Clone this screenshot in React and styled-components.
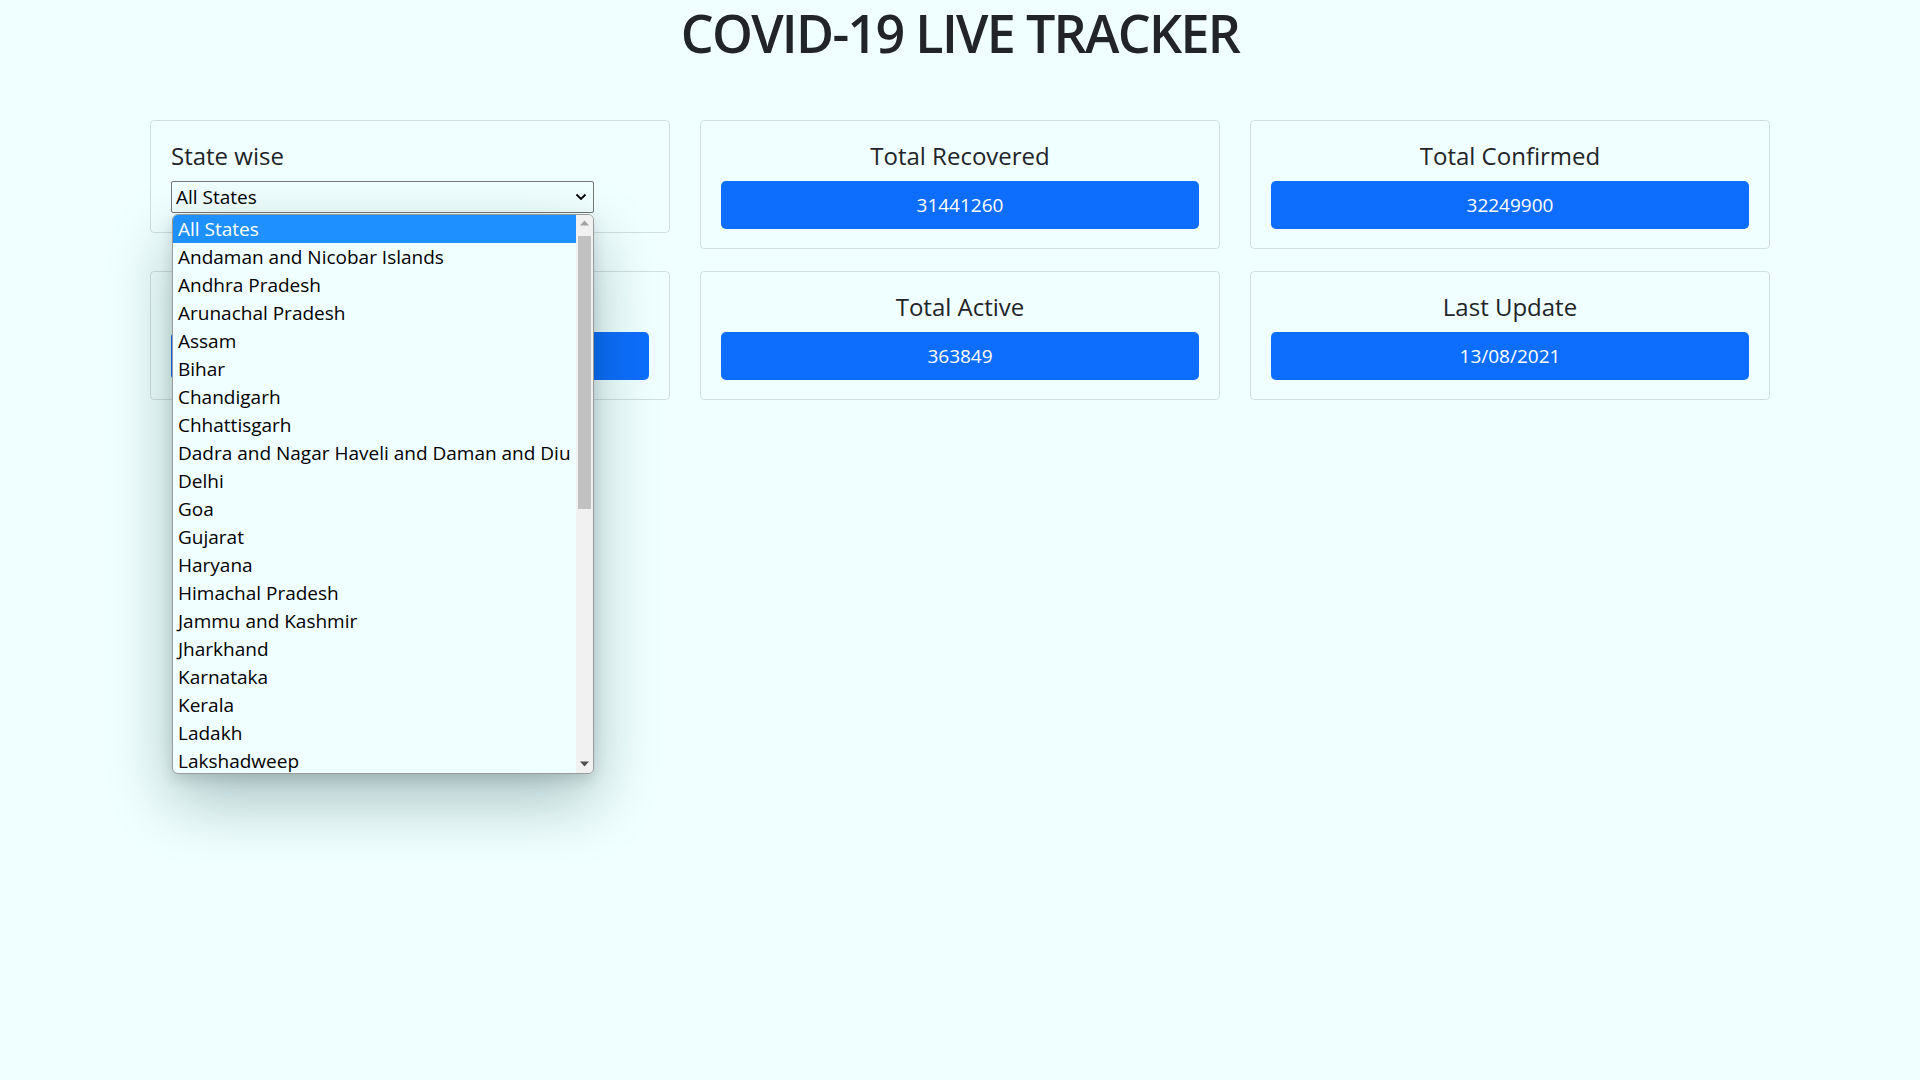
import React from "react";
import styled, { createGlobalStyle } from "styled-components";

const GlobalStyle = createGlobalStyle`
  html, body {
    margin: 0;
    padding: 0;
    background: #f0ffff;
    font-family: "Open Sans", "Noto Sans", "Liberation Sans", sans-serif;
    color: #212529;
  }
  * { box-sizing: border-box; }
`;

const Page = styled.div`
  min-height: 1080px;
  background: #f0ffff;
`;

const Title = styled.h1`
  margin: 0 0 55px;
  text-align: center;
  font-size: 52px;
  letter-spacing: -1.7px;
  font-weight: 600;
  line-height: 65px;
  color: #212529;
`;

const Grid = styled.div`
  width: 1620px;
  margin: 0 auto;
  display: grid;
  grid-template-columns: repeat(3, 520px);
  column-gap: 30px;
  row-gap: 22px;
  align-items: start;
`;

const Card = styled.div`
  position: relative;
  z-index: ${(p) => (p.$raised ? 5 : 1)};
  border: 1px solid rgba(0, 0, 0, 0.125);
  border-radius: 4px;
  padding: 19px 20px;
  background: transparent;
`;

const CardTitle = styled.h4`
  margin: 2px 0 10px;
  font-size: 24px;
  font-weight: 500;
  line-height: 28.8px;
  text-align: ${(p) => (p.$left ? "left" : "center")};
  color: #212529;
`;

const ValueButton = styled.div`
  height: 48px;
  border-radius: 5px;
  background: #0d6efd;
  color: #fff;
  font-size: 19px;
  display: flex;
  align-items: center;
  justify-content: center;
`;

const SelectWrap = styled.div`
  position: relative;
  width: 423px;
`;

const SelectBox = styled.div`
  height: 32px;
  border: 1px solid #767676;
  border-radius: 2px;
  background: #f0ffff;
  display: flex;
  align-items: center;
  justify-content: space-between;
  padding: 0 6px 0 4px;
  font-size: 19px;
  color: #000;
`;

const Popup = styled.div`
  position: absolute;
  top: 33px;
  left: 1px;
  width: 422px;
  height: 560px;
  display: flex;
  background: #f0ffff;
  border: 1px solid #9a9a9a;
  border-radius: 6px;
  overflow: hidden;
  box-shadow: 0 26px 64px rgba(0, 50, 50, 0.3), 0 6px 14px rgba(0, 0, 0, 0.12);
`;

const OptionList = styled.div`
  flex: 1;
  display: flex;
  flex-direction: column;
  overflow: hidden;
`;

const Option = styled.div`
  height: 28px;
  flex: 0 0 28px;
  display: flex;
  align-items: center;
  padding-left: 5px;
  font-size: 19px;
  white-space: nowrap;
  color: ${(p) => (p.$active ? "#fff" : "#000")};
  background: ${(p) => (p.$active ? "#1e90ff" : "transparent")};
`;

const ScrollTrack = styled.div`
  width: 17px;
  background: #f1f1f1;
  display: flex;
  flex-direction: column;
  align-items: center;
`;

const ScrollArrow = styled.div`
  height: 17px;
  flex: 0 0 17px;
  display: flex;
  align-items: center;
  justify-content: center;
`;

const Thumb = styled.div`
  width: 13px;
  height: 273px;
  margin-top: 4px;
  background: #c1c1c1;
`;

const Spacer = styled.div`
  flex: 1;
`;

const states = [
  "All States",
  "Andaman and Nicobar Islands",
  "Andhra Pradesh",
  "Arunachal Pradesh",
  "Assam",
  "Bihar",
  "Chandigarh",
  "Chhattisgarh",
  "Dadra and Nagar Haveli and Daman and Diu",
  "Delhi",
  "Goa",
  "Gujarat",
  "Haryana",
  "Himachal Pradesh",
  "Jammu and Kashmir",
  "Jharkhand",
  "Karnataka",
  "Kerala",
  "Ladakh",
  "Lakshadweep",
];

const Chevron = () => (
  <svg width="12" height="8" viewBox="0 0 12 8">
    <path d="M1.5 1.5 L6 6 L10.5 1.5" fill="none" stroke="#000" strokeWidth="1.8" />
  </svg>
);

const Tri = ({ up, color }) => (
  <svg width="9" height="6" viewBox="0 0 9 6">
    <path d={up ? "M0 5.5 L4.5 0.5 L9 5.5 Z" : "M0 0.5 L4.5 5.5 L9 0.5 Z"} fill={color} />
  </svg>
);

const StatCard = ({ title, value }) => (
  <Card>
    <CardTitle>{title}</CardTitle>
    <ValueButton>{value}</ValueButton>
  </Card>
);

export default function App() {
  return (
    <Page>
      <GlobalStyle />
      <Title>COVID-19 LIVE TRACKER</Title>
      <Grid>
        <Card $raised>
          <CardTitle $left>State wise</CardTitle>
          <SelectWrap>
            <SelectBox>
              <span>All States</span>
              <Chevron />
            </SelectBox>
            <Popup>
              <OptionList>
                {states.map((s, i) => (
                  <Option key={s} $active={i === 0}>
                    {s}
                  </Option>
                ))}
              </OptionList>
              <ScrollTrack>
                <ScrollArrow>
                  <Tri up color="#a3a3a3" />
                </ScrollArrow>
                <Thumb />
                <Spacer />
                <ScrollArrow>
                  <Tri color="#505050" />
                </ScrollArrow>
              </ScrollTrack>
            </Popup>
          </SelectWrap>
        </Card>
        <StatCard title="Total Recovered" value="31441260" />
        <StatCard title="Total Confirmed" value="32249900" />
        <StatCard title="Total Deceased" value="432079" />
        <StatCard title="Total Active" value="363849" />
        <StatCard title="Last Update" value="13/08/2021" />
      </Grid>
    </Page>
  );
}
